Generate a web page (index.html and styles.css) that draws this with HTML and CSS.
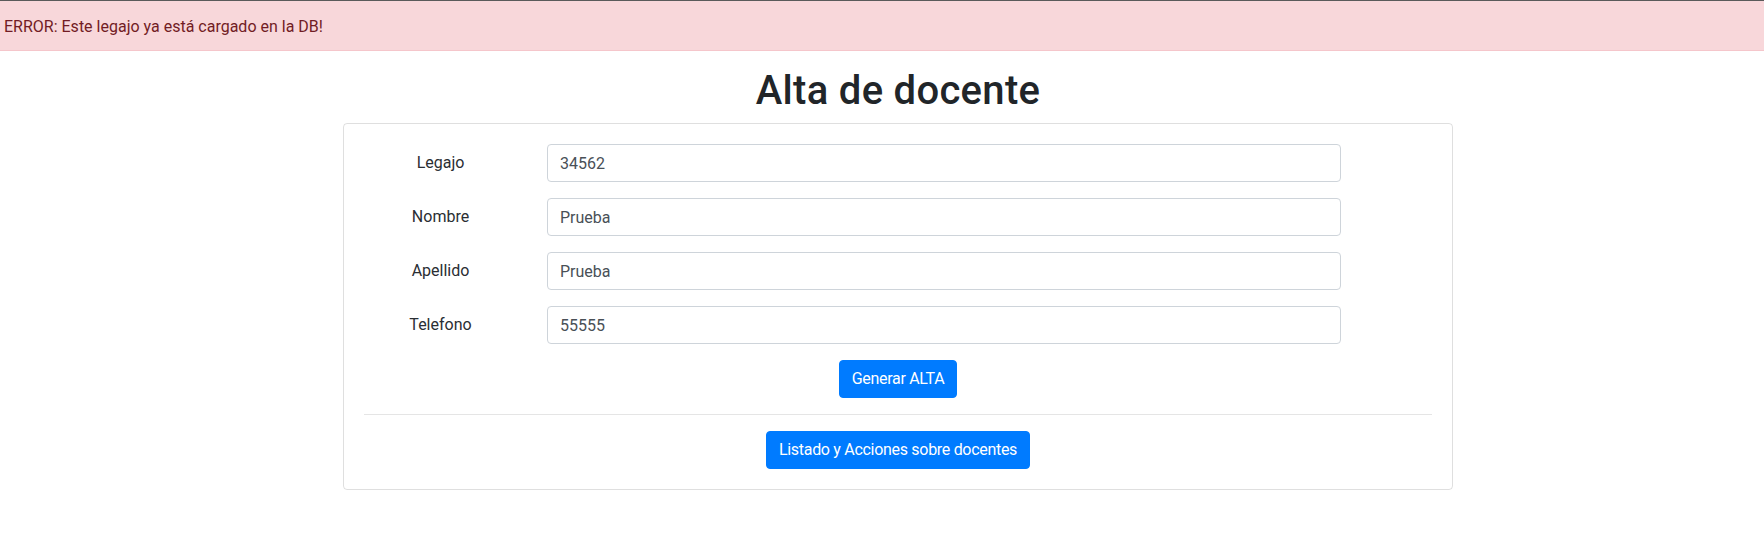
FILE: index.html
```html
<!DOCTYPE html>
<html lang="es">
<head>
<meta charset="utf-8">
<title>Alta de docente</title>
<link rel="stylesheet" href="styles.css">
</head>
<body>
<div class="alert">ERROR: Este legajo ya está cargado en la DB!</div>
<main class="container">
  <h1 class="title">Alta de docente</h1>
  <div class="card">
    <form class="card-body">
      <div class="row">
        <label class="label">Legajo</label>
        <div class="field"><input class="input" type="text" value="34562"></div>
      </div>
      <div class="row">
        <label class="label">Nombre</label>
        <div class="field"><input class="input" type="text" value="Prueba"></div>
      </div>
      <div class="row">
        <label class="label">Apellido</label>
        <div class="field"><input class="input" type="text" value="Prueba"></div>
      </div>
      <div class="row">
        <label class="label">Telefono</label>
        <div class="field"><input class="input" type="text" value="55555"></div>
      </div>
      <div class="actions"><button class="btn" type="button">Generar ALTA</button></div>
      <hr class="divider">
      <div class="actions"><button class="btn" type="button">Listado y Acciones sobre docentes</button></div>
    </form>
  </div>
</main>
</body>
</html>
```
FILE: styles.css
```css
* { box-sizing: border-box; }
html, body { margin: 0; padding: 0; }
body {
  font-family: Roboto, "Noto Sans", sans-serif;
  font-size: 16px;
  line-height: 1.5;
  color: #212529;
  background: #fff;
  border-top: 1px solid #5a5a5a;
}
.alert {
  background: #f8d7da;
  color: #721c24;
  border-bottom: 1px solid #f5c6cb;
  padding: 14px 4px 11px;
  margin-bottom: 16px;
}
.container {
  width: 1140px;
  padding: 0 15px;
  margin: 0 auto;
  position: relative;
  left: 16px;
}
.title {
  margin: 0 0 8px;
  font-size: 40px;
  font-weight: 500;
  line-height: 1.2;
  text-align: center;
  letter-spacing: 0.3px;
}
.card {
  border: 1px solid rgba(0,0,0,.125);
  border-radius: 4px;
}
.card-body { padding: 20px; display: block; margin: 0; }
.row {
  display: flex;
  margin: 0 -15px 16px;
  align-items: center;
}
.label {
  flex: 0 0 16.6667%;
  padding: 0 15px;
  text-align: center;
  color: #2a2e33;
}
.field {
  flex: 0 0 75%;
  padding: 0 15px;
}
.input {
  display: block;
  width: 100%;
  height: 38px;
  padding: 6px 12px;
  font: inherit;
  color: #495057;
  border: 1px solid #ced4da;
  border-radius: 4px;
  background: #fff;
}
.actions { text-align: center; }
.btn {
  font: inherit;
  letter-spacing: -0.3px;
  color: #fff;
  background: #007bff;
  border: 1px solid #007bff;
  border-radius: 4px;
  padding: 6px 12px;
  line-height: 1.5;
}
.divider {
  margin: 16px 0;
  border: 0;
  border-top: 1px solid rgba(0,0,0,.1);
}
```
